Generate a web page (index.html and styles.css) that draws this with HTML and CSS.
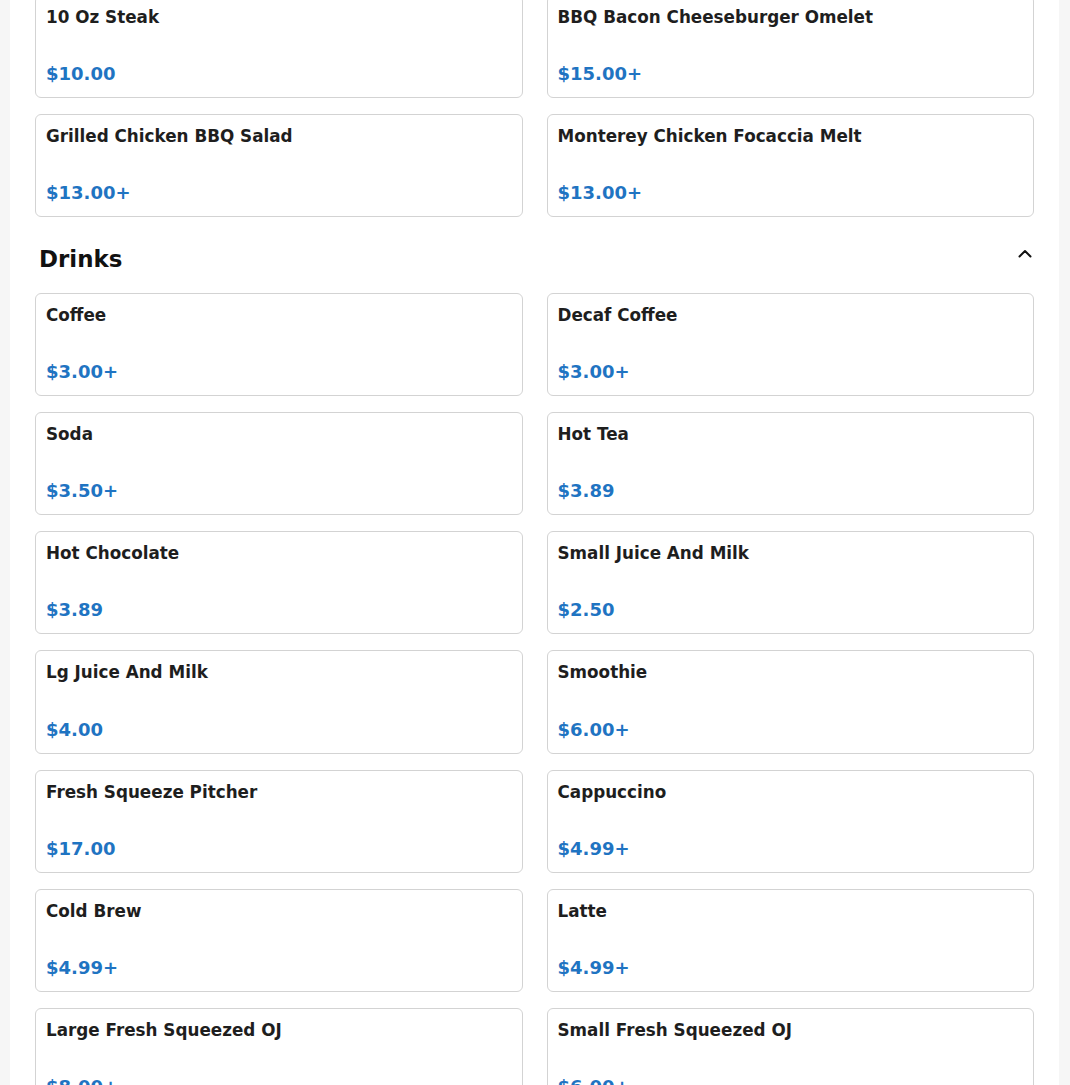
FILE: index.html
```html
<!DOCTYPE html>
<html lang="en">
<head>
<meta charset="utf-8">
<title>Menu</title>
<link rel="stylesheet" href="styles.css">
</head>
<body>
<main class="menu">
  <section class="category category-first">
    <div class="items">
      <div class="item"><div class="item-name">10 Oz Steak</div><div class="item-price">$10.00</div></div>
      <div class="item"><div class="item-name">BBQ Bacon Cheeseburger Omelet</div><div class="item-price">$15.00+</div></div>
      <div class="item"><div class="item-name">Grilled Chicken BBQ Salad</div><div class="item-price">$13.00+</div></div>
      <div class="item"><div class="item-name">Monterey Chicken Focaccia Melt</div><div class="item-price">$13.00+</div></div>
    </div>
  </section>
  <section class="category">
    <div class="category-header">
      <h2 class="category-title">Drinks</h2>
      <svg class="chevron" width="14" height="9" viewBox="0 0 14 9" aria-hidden="true"><path d="M1.5 7.5 L7 2 L12.5 7.5" fill="none" stroke="#111" stroke-width="2" stroke-linecap="round" stroke-linejoin="round"/></svg>
    </div>
    <div class="items">
      <div class="item"><div class="item-name">Coffee</div><div class="item-price">$3.00+</div></div>
      <div class="item"><div class="item-name">Decaf Coffee</div><div class="item-price">$3.00+</div></div>
      <div class="item"><div class="item-name">Soda</div><div class="item-price">$3.50+</div></div>
      <div class="item"><div class="item-name">Hot Tea</div><div class="item-price">$3.89</div></div>
      <div class="item"><div class="item-name">Hot Chocolate</div><div class="item-price">$3.89</div></div>
      <div class="item"><div class="item-name">Small Juice And Milk</div><div class="item-price">$2.50</div></div>
      <div class="item"><div class="item-name">Lg Juice And Milk</div><div class="item-price">$4.00</div></div>
      <div class="item"><div class="item-name">Smoothie</div><div class="item-price">$6.00+</div></div>
      <div class="item"><div class="item-name">Fresh Squeeze Pitcher</div><div class="item-price">$17.00</div></div>
      <div class="item"><div class="item-name">Cappuccino</div><div class="item-price">$4.99+</div></div>
      <div class="item"><div class="item-name">Cold Brew</div><div class="item-price">$4.99+</div></div>
      <div class="item"><div class="item-name">Latte</div><div class="item-price">$4.99+</div></div>
      <div class="item"><div class="item-name">Large Fresh Squeezed OJ</div><div class="item-price">$8.00+</div></div>
      <div class="item"><div class="item-name">Small Fresh Squeezed OJ</div><div class="item-price">$6.00+</div></div>
    </div>
  </section>
</main>
</body>
</html>
```
FILE: styles.css
```css
html, body {
  margin: 0;
  padding: 0;
}
body {
  background: #f6f6f6;
  font-family: "DejaVu Sans", "Liberation Sans", sans-serif;
  color: #212529;
  overflow: hidden;
}
.menu {
  width: 1049px;
  margin-left: 10px;
  background: #ffffff;
  padding: 0 25px 40px 25px;
  box-sizing: border-box;
  min-height: 1200px;
}
.category-first {
  margin-top: -5px;
}
.items {
  display: grid;
  grid-template-columns: 1fr 1fr;
  column-gap: 24px;
  row-gap: 16px;
}
.item {
  border: 1px solid #d3d3d3;
  border-radius: 6px;
  padding: 10px;
  height: 103.2px;
  box-sizing: border-box;
  display: flex;
  flex-direction: column;
  justify-content: space-between;
  background: #fff;
}
.item-name {
  font-size: 16.8px;
  font-weight: bold;
  line-height: 22px;
  color: #1e1e1e;
}
.item-price {
  font-size: 18px;
  font-weight: bold;
  line-height: 27px;
  color: #1f74c2;
}
.category-header {
  display: flex;
  align-items: center;
  justify-content: space-between;
  padding: 28.5px 2px 20px 4px;
}
.category-title {
  margin: 0;
  font-size: 22.9px;
  line-height: 27px;
  font-weight: bold;
  color: #111;
}
.chevron {
  display: block;
  margin-top: -12px;
}
```
